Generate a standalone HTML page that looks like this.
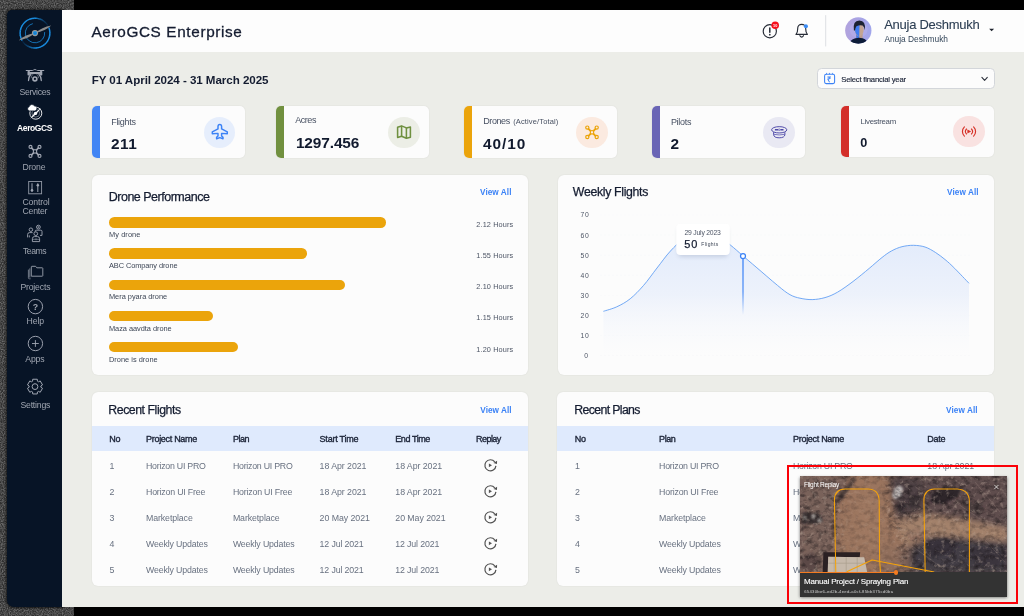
<!DOCTYPE html>
<html lang="en">
<head>
<meta charset="utf-8">
<title>AeroGCS Enterprise</title>
<style>
*{box-sizing:border-box;margin:0;padding:0}
html,body{width:1024px;height:616px;overflow:hidden;background:#000}
body{position:relative;font-family:"Liberation Sans",sans-serif;color:#1b2337}
.abs{position:absolute}
#frame{left:0;top:0;width:76px;height:616px;background:#474747;overflow:hidden}
#main{left:62px;top:9.5px;width:962px;height:597px;background:#ecede8}
#side{left:7px;top:9.5px;width:56px;height:597px;background:#071426;border-radius:5px 0 0 7px;box-shadow:0 0 2.5px .5px rgba(0,0,0,.65)}
#hdr{left:62px;top:9.5px;width:962px;height:42px;background:#fdfdfd}
.t{position:absolute;white-space:nowrap;line-height:1}
.card{position:absolute;top:106px;width:153px;height:51.6px;background:#fcfcfc;border-radius:5px;overflow:hidden;box-shadow:0 0 1.5px rgba(0,0,0,.10)}
.card i{position:absolute;left:0;top:0;width:8px;height:100%}
.card b{position:absolute;top:10.6px;width:31.6px;height:31.6px;border-radius:50%}
.panel{position:absolute;background:#fcfcfc;border-radius:6px;box-shadow:0 0 1.5px rgba(0,0,0,.10)}
.thead{position:absolute;left:0;top:33.7px;width:100%;height:25.6px;background:#dfeafd}
.bar{position:absolute;left:108.9px;height:10.5px;border-radius:5.3px;background:#eba40b}
.lay{position:absolute;left:0;top:0;width:1024px;height:616px;will-change:transform;pointer-events:none}
#svg{position:absolute;left:0;top:0;width:1024px;height:616px;pointer-events:none}
</style>
</head>
<body>
<div id="frame" class="abs"><svg width="76" height="616"><filter id="nz" x="0" y="0" width="100%" height="100%" color-interpolation-filters="sRGB"><feTurbulence type="fractalNoise" baseFrequency="0.85" numOctaves="2" seed="3"/><feColorMatrix type="matrix" values="0 0 0 0 0.42  0 0 0 0 0.42  0 0 0 0 0.42  2.2 0 0 0 -0.7"/></filter><rect width="76" height="616" fill="#303030"/><rect width="76" height="616" filter="url(#nz)"/></svg></div>
<div class="abs" style="left:74px;top:0;width:950px;height:616px;background:#000"></div>
<div id="side" class="abs"></div>
<div id="main" class="abs"></div>
<div id="hdr" class="abs"></div>

<div class="card" style="left:92.2px"><i style="background:#4285f4"></i><b style="left:111.7px;background:#e6eefc"></b></div>
<div class="card" style="left:276.2px"><i style="background:#71903f"></i><b style="left:112px;background:#eceee6"></b></div>
<div class="card" style="left:464.2px"><i style="background:#eba40b"></i><b style="left:112px;background:#fbeae0"></b></div>
<div class="card" style="left:651.8px"><i style="background:#6a65b5"></i><b style="left:111.7px;background:#e9e9f3"></b></div>
<div class="card" style="left:841.3px;top:105.8px"><i style="background:#d32f2a"></i><b style="left:111.8px;top:10px;background:#f9e2e1"></b></div>
<div class="abs" style="left:817.4px;top:68.4px;width:177.2px;height:20.3px;background:#fcfcfc;border:0.6px solid #d3d6da;border-radius:4.5px"></div>

<div class="panel" style="left:92px;top:175px;width:436px;height:199.6px">
</div>
<div class="bar" style="top:217.2px;width:277px"></div>
<div class="bar" style="top:248.4px;width:198px"></div>
<div class="bar" style="top:279.6px;width:235.7px"></div>
<div class="bar" style="top:310.7px;width:104.2px"></div>
<div class="bar" style="top:341.9px;width:128.8px"></div>
<div class="panel" style="left:558px;top:175px;width:436.3px;height:199.6px"></div>
<div class="panel" style="left:92px;top:392px;width:436px;height:193.5px;overflow:hidden"><div class="thead"></div></div>
<div class="panel" style="left:556.6px;top:392px;width:437.7px;height:193.5px;overflow:hidden"><div class="thead"></div></div>

<svg id="svg" viewBox="0 0 1024 616">
<defs>
<clipPath id="avc"><circle cx="858.3" cy="30.5" r="13.15"/></clipPath>
<linearGradient id="avg" x1="0" x2="1" y1="0" y2="0"><stop offset="0" stop-color="#b3a3dd"/><stop offset=".5" stop-color="#a9a4e4"/><stop offset="1" stop-color="#a0a6ec"/></linearGradient>
<linearGradient id="fcg" x1="0" x2="1" y1="0" y2="0"><stop offset="0" stop-color="#b59aa8"/><stop offset=".5" stop-color="#a793b8"/><stop offset="1" stop-color="#7f8fd8"/></linearGradient>
<linearGradient id="cfill" x1="0" x2="0" y1="0" y2="1"><stop offset="0" stop-color="#dfe9fb" stop-opacity=".95"/><stop offset=".5" stop-color="#e9effb" stop-opacity=".8"/><stop offset="1" stop-color="#f6f8fc" stop-opacity="0"/></linearGradient>
<linearGradient id="vl" x1="0" x2="0" y1="0" y2="1"><stop offset="0" stop-color="#3b82f6"/><stop offset=".6" stop-color="#3b82f6" stop-opacity=".85"/><stop offset="1" stop-color="#3b82f6" stop-opacity="0"/></linearGradient>
<filter id="avb" x="-10%" y="-10%" width="120%" height="120%"><feGaussianBlur stdDeviation="0.45"/></filter><filter id="tsh" x="-30%" y="-30%" width="160%" height="170%"><feGaussianBlur stdDeviation="2.2"/></filter>
</defs>
<path d="M22.10,40.55A14.9,14.9 0 0 1 20.29,35.48" stroke="#1a8de0" stroke-opacity="1.00" stroke-width="1.45" fill="none"/><path d="M20.34,35.77A14.9,14.9 0 0 1 20.35,30.39" stroke="#1a8de0" stroke-opacity="1.00" stroke-width="1.45" fill="none"/><path d="M20.30,30.68A14.9,14.9 0 0 1 22.12,25.62" stroke="#1a8de0" stroke-opacity="1.00" stroke-width="1.45" fill="none"/><path d="M21.97,25.88A14.9,14.9 0 0 1 25.39,21.72" stroke="#1a8de0" stroke-opacity="1.00" stroke-width="1.45" fill="none"/><path d="M25.16,21.91A14.9,14.9 0 0 1 29.78,19.15" stroke="#1a8de0" stroke-opacity="1.00" stroke-width="1.45" fill="none"/><path d="M29.50,19.25A14.9,14.9 0 0 1 34.78,18.20" stroke="#1a8de0" stroke-opacity="1.00" stroke-width="1.45" fill="none"/><path d="M34.48,18.21A14.9,14.9 0 0 1 36.12,18.24" stroke="#1a8de0" stroke-opacity="0.94" stroke-width="1.45" fill="none"/><path d="M35.82,18.22A14.9,14.9 0 0 1 37.45,18.40" stroke="#1a8de0" stroke-opacity="0.82" stroke-width="1.45" fill="none"/><path d="M37.16,18.36A14.9,14.9 0 0 1 38.77,18.68" stroke="#1a8de0" stroke-opacity="0.71" stroke-width="1.45" fill="none"/><path d="M38.48,18.61A14.9,14.9 0 0 1 40.05,19.08" stroke="#1a8de0" stroke-opacity="0.60" stroke-width="1.45" fill="none"/><path d="M39.77,18.98A14.9,14.9 0 0 1 41.29,19.59" stroke="#1a8de0" stroke-opacity="0.50" stroke-width="1.45" fill="none"/><path d="M41.02,19.47A14.9,14.9 0 0 1 42.48,20.22" stroke="#1a8de0" stroke-opacity="0.42" stroke-width="1.45" fill="none"/><path d="M42.22,20.07A14.9,14.9 0 0 1 43.61,20.94" stroke="#1a8de0" stroke-opacity="0.34" stroke-width="1.45" fill="none"/><path d="M43.37,20.77A14.9,14.9 0 0 1 44.67,21.77" stroke="#1a8de0" stroke-opacity="0.27" stroke-width="1.45" fill="none"/><path d="M44.44,21.58A14.9,14.9 0 0 1 45.65,22.68" stroke="#1a8de0" stroke-opacity="0.21" stroke-width="1.45" fill="none"/><path d="M45.44,22.47A14.9,14.9 0 0 1 46.55,23.69" stroke="#1a8de0" stroke-opacity="0.16" stroke-width="1.45" fill="none"/><path d="M46.36,23.46A14.9,14.9 0 0 1 47.35,24.76" stroke="#1a8de0" stroke-opacity="0.13" stroke-width="1.45" fill="none"/><path d="M47.18,24.52A14.9,14.9 0 0 1 48.05,25.91" stroke="#1a8de0" stroke-opacity="0.10" stroke-width="1.45" fill="none"/><path d="M48.82,27.52A14.9,14.9 0 0 1 49.88,32.31" stroke="#1a8de0" stroke-opacity="1.00" stroke-width="1.45" fill="none"/><path d="M49.86,32.02A14.9,14.9 0 0 1 49.40,36.91" stroke="#1a8de0" stroke-opacity="1.00" stroke-width="1.45" fill="none"/><path d="M49.48,36.62A14.9,14.9 0 0 1 47.55,41.14" stroke="#1a8de0" stroke-opacity="1.00" stroke-width="1.45" fill="none"/><path d="M47.70,40.89A14.9,14.9 0 0 1 44.48,44.59" stroke="#1a8de0" stroke-opacity="1.00" stroke-width="1.45" fill="none"/><path d="M44.71,44.40A14.9,14.9 0 0 1 40.51,46.95" stroke="#1a8de0" stroke-opacity="1.00" stroke-width="1.45" fill="none"/><path d="M40.78,46.83A14.9,14.9 0 0 1 36.00,47.97" stroke="#1a8de0" stroke-opacity="1.00" stroke-width="1.45" fill="none"/><path d="M36.30,47.94A14.9,14.9 0 0 1 34.59,47.99" stroke="#1a8de0" stroke-opacity="0.94" stroke-width="1.45" fill="none"/><path d="M34.89,48.00A14.9,14.9 0 0 1 33.19,47.89" stroke="#1a8de0" stroke-opacity="0.82" stroke-width="1.45" fill="none"/><path d="M33.49,47.92A14.9,14.9 0 0 1 31.80,47.65" stroke="#1a8de0" stroke-opacity="0.71" stroke-width="1.45" fill="none"/><path d="M32.09,47.71A14.9,14.9 0 0 1 30.44,47.29" stroke="#1a8de0" stroke-opacity="0.60" stroke-width="1.45" fill="none"/><path d="M30.73,47.37A14.9,14.9 0 0 1 29.12,46.79" stroke="#1a8de0" stroke-opacity="0.50" stroke-width="1.45" fill="none"/><path d="M29.40,46.91A14.9,14.9 0 0 1 27.86,46.18" stroke="#1a8de0" stroke-opacity="0.42" stroke-width="1.45" fill="none"/><path d="M28.12,46.32A14.9,14.9 0 0 1 26.65,45.44" stroke="#1a8de0" stroke-opacity="0.34" stroke-width="1.45" fill="none"/><path d="M26.90,45.61A14.9,14.9 0 0 1 25.53,44.60" stroke="#1a8de0" stroke-opacity="0.27" stroke-width="1.45" fill="none"/><path d="M25.76,44.79A14.9,14.9 0 0 1 24.48,43.66" stroke="#1a8de0" stroke-opacity="0.21" stroke-width="1.45" fill="none"/><path d="M24.70,43.86A14.9,14.9 0 0 1 23.53,42.62" stroke="#1a8de0" stroke-opacity="0.16" stroke-width="1.45" fill="none"/><path d="M23.73,42.84A14.9,14.9 0 0 1 22.69,41.49" stroke="#1a8de0" stroke-opacity="0.13" stroke-width="1.45" fill="none"/><path d="M22.86,41.73A14.9,14.9 0 0 1 21.95,40.29" stroke="#1a8de0" stroke-opacity="0.10" stroke-width="1.45" fill="none"/><path d="M32.82,23.65A9.7,9.7 0 1 0 44.65,32.09" stroke="#1a8de0" stroke-width=".75" fill="none"/><path d="M35,33.1Q44.2,31.7 51.3,25.5Q42,27 35,33.1Q28,39.1 18.7,40.4Q25.8,34.3 35,33.1Z" fill="#8d8d8d"/><circle cx="35.0" cy="33.1" r="3.1" fill="#9a9a9a"/><circle cx="35.0" cy="33.1" r="2.1" fill="#1a8de0"/><circle cx="35.0" cy="33.300000000000004" r=".7" fill="#176fb5"/>
<!-- services -->
<g stroke="#a1a7b3" fill="none" stroke-width="1" stroke-linecap="round">
<path d="M26.2,70.5H32.4M37.6,70.5H43.8"/>
<path d="M33.5,69.9Q34.9,68.7 36.3,69.9" stroke-width=".9"/>
<path d="M30.9,74.2Q28.5,76.6 28.5,80.5M38.9,74.2Q41.3,76.6 41.3,80.5" stroke-width="1.25"/>
<path d="M32.8,74.4Q31.3,75.8 31.2,77.8M37,74.4Q38.5,75.8 38.6,77.8" stroke-width=".7" opacity=".8"/>
</g>
<g fill="#a1a7b3"><rect x="29" y="72" width="11.8" height="2.1" rx="1"/><rect x="27.5" y="71.1" width="2.4" height="4.4" rx=".7"/><rect x="39.9" y="71.1" width="2.4" height="4.4" rx=".7"/>
<circle cx="34.9" cy="78.9" r="2.75"/></g><circle cx="34.9" cy="78.9" r="1.1" fill="#071426"/>
<!-- aerogcs -->
<g stroke="#fff" fill="none"><circle cx="35.8" cy="113.2" r="6" stroke-width=".9"/><circle cx="35.8" cy="113.2" r="3.9" stroke-width=".5" opacity=".75"/></g>
<path d="M30.1,118.7 Q33.4,114.2 35,113 Q38.4,109.6 41,108.1 Q38.9,111.6 36.2,113.9 Q34.2,116 30.1,118.7Z" fill="#fff"/><circle cx="35.5" cy="113.4" r="1.7" fill="#fff"/>
<path d="M29.4,110.9 a2.1,2.1 0 0 1 -.3,-4.1 a2.9,2.9 0 0 1 5.3,-.9 a2.3,2.3 0 0 1 1.4,4.3 q-.4,.7 -1.2,.7z" fill="#fff" stroke="#071426" stroke-width=".7"/>
<!-- drone -->
<g stroke="#a1a7b3" fill="none" stroke-width="1.75"><path d="M31.1,147.5L38.9,155.3M38.9,147.5L31.1,155.3"/><circle cx="30.5" cy="146.9" r="1.5" stroke-width="1.15"/><circle cx="39.5" cy="146.9" r="1.5" stroke-width="1.15"/><circle cx="30.5" cy="155.9" r="1.5" stroke-width="1.15"/><circle cx="39.5" cy="155.9" r="1.5" stroke-width="1.15"/><rect x="33.4" y="149.8" width="3.2" height="3.2" fill="#071426" stroke-width="1.1"/></g>
<!-- control center -->
<g stroke="#9299a6" fill="none" stroke-width=".9"><rect x="28.7" y="181.5" width="12.9" height="12.3"/><path d="M32,183.2V192M37.8,183.2V192" stroke-width="1.1"/></g><circle cx="32" cy="190.3" r="1.25" fill="#a1a7b3"/><circle cx="37.8" cy="185.3" r="1.25" fill="#a1a7b3"/>
<!-- teams -->
<g stroke="#a1a7b3" fill="none" stroke-width=".9"><circle cx="30.9" cy="229.7" r="1.75"/><path d="M27.6,237.4V234.6Q27.6,232.6 29.6,232.6H32.6"/><path d="M29.3,235.4v2"/><circle cx="38.4" cy="227.1" r="1.9"/><path d="M37.4,227.1h2M38.4,226.1v2" stroke-width=".6"/><path d="M35.2,232V231.2Q35.2,230.2 36.2,230.2H40.8Q42,230.2 42,231.4V235.4H40"/><circle cx="35.8" cy="233.7" r="1.85" fill="#071426"/><path d="M32.4,241.6V238.6Q32.4,236.6 34.4,236.6H37.4Q39.6,236.6 39.6,238.6V241.6Z" fill="#071426"/><path d="M32.4,239.3h7.2M36,238.3v2" stroke-width=".6"/></g>
<!-- projects -->
<g stroke="#8e95a2" fill="none" stroke-width="1" stroke-linejoin="round"><path d="M30.6,278.8H29.4Q28.4,278.8 28.4,277.8V269.6" stroke="#737b89"/><path d="M31.3,276.2V266.9Q31.3,266.3 31.9,266.3H35.6L36.8,267.8H42.2Q42.8,267.8 42.8,268.4V275.6Q42.8,276.2 42.2,276.2Z"/><path d="M29.8,277.6V268.4" stroke="#737b89"/></g>
<!-- help -->
<circle cx="35.4" cy="306.6" r="7.2" stroke="#a1a7b3" fill="none" stroke-width=".95"/>
<!-- apps -->
<circle cx="35.4" cy="343.5" r="7.2" stroke="#a1a7b3" fill="none" stroke-width=".95"/><path d="M32,343.5h6.8M35.4,340.1v6.8" stroke="#a1a7b3" stroke-width=".9" fill="none"/>
<!-- settings -->
<path d="M32.59,381.21 L32.72,379.24 L37.28,379.24 L37.41,381.21 L38.46,381.82 L40.23,380.95 L42.51,384.89 L40.87,385.99 L40.87,387.21 L42.51,388.31 L40.23,392.25 L38.46,391.38 L37.41,391.99 L37.28,393.96 L32.72,393.96 L32.59,391.99 L31.54,391.38 L29.77,392.25 L27.49,388.31 L29.13,387.21 L29.13,385.99 L27.49,384.89 L29.77,380.95 L31.54,381.82Z" fill="none" stroke="#a1a7b3" stroke-width="1" stroke-linejoin="round"/><circle cx="35.0" cy="386.6" r="2.9" fill="none" stroke="#a1a7b3" stroke-width="1"/>
<!-- header -->
<g stroke="#262b36" fill="none" stroke-width="1.15" stroke-linecap="round"><circle cx="769.8" cy="31.2" r="6.6"/><path d="M769.8,27.9V32.2" stroke-width="1.5"/><path d="M796,34.4C797.8,32.6 797.7,30.5 797.7,28.3A4,4 0 0 1 805.7,28.3C805.7,30.5 805.6,32.6 807.4,34.4Z" stroke-linejoin="round"/><path d="M799.9,35.7Q801.7,38.5 803.5,35.7"/></g>
<circle cx="769.8" cy="34.7" r=".85" fill="#262b36"/>
<circle cx="775.2" cy="25.3" r="3.8" fill="#f70f1c"/>
<circle cx="805.9" cy="26.3" r="2.05" fill="#3b8cf6"/>
<path d="M825.7,15.2V46.4" stroke="#dddfe3" stroke-width="1"/>
<g clip-path="url(#avc)"><rect x="844" y="16" width="29" height="29" fill="url(#avg)"/><g filter="url(#avb)">
<ellipse cx="858.6" cy="29.6" rx="9" ry="8" fill="#bdb8ee" opacity=".35"/>
<path d="M856.3,34V38.6H862.6V34Z" fill="#b99b8e"/><path d="M856.3,34V38.6H859.2V34Z" fill="#3f78e6"/>
<path d="M848.8,45Q849.6,39.6 855.4,38.2Q859,37.2 862.6,38.2Q867.8,39.6 868.4,45Z" fill="#101a38"/>
<ellipse cx="859.3" cy="29.6" rx="4.4" ry="7" fill="#c4a592"/>
<path d="M859.6,22.6Q854.6,22.6 854.9,29.6Q855.2,35 859.2,36.8Z" fill="#3f7df0"/>
<path d="M853.9,30.6Q852.4,20.8 859.4,20.6Q866,20.8 864.9,30.2Q864.2,26.6 862.6,25.4Q859,24.6 856.4,26.2Q855.2,27.8 855,30.6Z" fill="#1d2030"/>
</g></g>
<path d="M989.1,28.7H994.1L991.6,31.3Z" fill="#1d222c"/>
<!-- select -->
<g stroke="#3b82f6" fill="none" stroke-width="1.05"><rect x="824.6" y="74.3" width="10" height="9.3" rx="1.6"/><path d="M826.5,72.9V74.3M829.5,72.9V74.3M832.6,72.9V74.3" stroke-width=".8"/></g>
<path d="M981.9,77.3L984.6,80.4L987.3,77.3" stroke="#2a2f3a" fill="none" stroke-width="1.05" stroke-linecap="round" stroke-linejoin="round"/>
<!-- card icons -->
<path d="M219.8,124.4Q221.6,124.4 221.6,126.6L221.6,128.9L227.3,131.8L227.3,133.7L221.6,133.4L221.6,136L223,137.3L223,138.7L219.8,137.6L216.6,138.7L216.6,137.3L218,136L218,133.4L212.3,133.7L212.3,131.8L218,128.9L218,126.6Q218,124.4 219.8,124.4Z" fill="none" stroke="#3b82f6" stroke-width="1.45" stroke-linejoin="round"/>
<g fill="none" stroke="#6f9040" stroke-width="1.55" stroke-linejoin="round"><path d="M397.6,127.3L401.6,125.9L406.4,127.9L410.4,127V137.2L406.4,138.3L401.6,136.2L397.6,137.4Z"/><path d="M401.6,126V136.2M406.4,127.9V138.2"/></g>
<g stroke="#eba40b" fill="none" stroke-width="1.9"><path d="M588,128.3L596,136.3M596,128.3L588,136.3"/><circle cx="587.3" cy="127.6" r="1.6" stroke-width="1.2"/><circle cx="596.7" cy="127.6" r="1.6" stroke-width="1.2"/><circle cx="587.3" cy="137" r="1.6" stroke-width="1.2"/><circle cx="596.7" cy="137" r="1.6" stroke-width="1.2"/><rect x="590.4" y="130.7" width="3.2" height="3.2" fill="#fcebe2" stroke-width="1.1"/></g>
<g stroke="#4b46a6" fill="none" stroke-width=".95"><ellipse cx="779.2" cy="129.8" rx="7.6" ry="3.15"/><path d="M773.6,132.2V134.6Q773.9,137.8 779.2,137.8Q784.6,137.8 784.9,134.6V132.2"/><path d="M773.7,134.3Q779.2,135.6 784.8,134.3" stroke-width=".7"/><path d="M774.9,129.8H778M780.4,129.8H783.5" stroke-width="1.5"/><circle cx="779.2" cy="129.7" r=".9" stroke-width=".6"/></g>
<g stroke="#d63027" fill="none" stroke-width="1.15" stroke-linecap="round"><path d="M964.4,126.8A6.6,6.6 0 0 0 964.4,136.2M973.6,126.8A6.6,6.6 0 0 1 973.6,136.2"/><path d="M966.5,129A3.7,3.7 0 0 0 966.5,134M971.5,129A3.7,3.7 0 0 1 971.5,134"/></g><path d="M967.4,129.5L971.2,131.5L967.4,133.5Z" fill="#d63027"/>
<path d="M600,355.5H972" stroke="#f1f2f5" stroke-width=".5" stroke-dasharray="2 2" opacity=".55"/><path d="M600,335.4H972" stroke="#f1f2f5" stroke-width=".5" stroke-dasharray="2 2" opacity=".55"/><path d="M600,315.4H972" stroke="#f1f2f5" stroke-width=".5" stroke-dasharray="2 2" opacity=".55"/><path d="M600,295.3H972" stroke="#f1f2f5" stroke-width=".5" stroke-dasharray="2 2" opacity=".55"/><path d="M600,275.2H972" stroke="#f1f2f5" stroke-width=".5" stroke-dasharray="2 2" opacity=".55"/><path d="M600,255.2H972" stroke="#f1f2f5" stroke-width=".5" stroke-dasharray="2 2" opacity=".55"/><path d="M600,235.1H972" stroke="#f1f2f5" stroke-width=".5" stroke-dasharray="2 2" opacity=".55"/><path d="M600,215.0H972" stroke="#f1f2f5" stroke-width=".5" stroke-dasharray="2 2" opacity=".55"/><path d="M603.4,311.3C605.6,310.6 612.3,308.9 616.8,306.8C621.3,304.7 625.7,302.4 630.2,298.8C634.7,295.2 639.1,290.5 643.6,285.4C648.1,280.3 652.5,273.7 657,268C661.5,262.3 665.9,255.9 670.4,251.1C674.9,246.3 678.7,242.1 684,239C689.3,235.9 696.0,233.0 702,232.8C708.0,232.6 715.2,235.9 720,238C724.8,240.1 726.8,242.2 730.6,245.2C734.4,248.2 738.8,252.2 743,255.9C747.2,259.6 750.4,262.2 756.1,267.1C761.9,272.0 771.9,280.8 777.5,285.4C783.1,290.0 786.2,292.6 790,294.7C793.8,296.8 796.3,297.4 800,298.2C803.7,299.0 808.0,299.7 812.2,299.6C816.4,299.5 820.8,298.8 825,297.6C829.2,296.4 832.8,294.9 837.5,292.2C842.2,289.5 847.7,285.5 853,281.5C858.3,277.5 864.4,272.4 869.2,268.4C874.0,264.4 878.3,260.4 882,257.5C885.7,254.6 888.1,252.8 891.4,251C894.7,249.2 898.3,247.6 902,246.7C905.7,245.8 909.7,245.2 913.5,245.3C917.3,245.4 921.3,245.8 925,247C928.7,248.2 932.4,250.5 935.7,252.6C939.0,254.7 941.8,256.9 945,259.5C948.2,262.1 950.7,264.4 954.7,268.4C958.7,272.4 966.6,280.8 969,283.3L969,356L603.4,356Z" fill="url(#cfill)"/><path d="M603.4,311.3C605.6,310.6 612.3,308.9 616.8,306.8C621.3,304.7 625.7,302.4 630.2,298.8C634.7,295.2 639.1,290.5 643.6,285.4C648.1,280.3 652.5,273.7 657,268C661.5,262.3 665.9,255.9 670.4,251.1C674.9,246.3 678.7,242.1 684,239C689.3,235.9 696.0,233.0 702,232.8C708.0,232.6 715.2,235.9 720,238C724.8,240.1 726.8,242.2 730.6,245.2C734.4,248.2 738.8,252.2 743,255.9C747.2,259.6 750.4,262.2 756.1,267.1C761.9,272.0 771.9,280.8 777.5,285.4C783.1,290.0 786.2,292.6 790,294.7C793.8,296.8 796.3,297.4 800,298.2C803.7,299.0 808.0,299.7 812.2,299.6C816.4,299.5 820.8,298.8 825,297.6C829.2,296.4 832.8,294.9 837.5,292.2C842.2,289.5 847.7,285.5 853,281.5C858.3,277.5 864.4,272.4 869.2,268.4C874.0,264.4 878.3,260.4 882,257.5C885.7,254.6 888.1,252.8 891.4,251C894.7,249.2 898.3,247.6 902,246.7C905.7,245.8 909.7,245.2 913.5,245.3C917.3,245.4 921.3,245.8 925,247C928.7,248.2 932.4,250.5 935.7,252.6C939.0,254.7 941.8,256.9 945,259.5C948.2,262.1 950.7,264.4 954.7,268.4C958.7,272.4 966.6,280.8 969,283.3" fill="none" stroke="#5b9bf3" stroke-width=".85"/><rect x="742.35" y="257" width="1.3" height="58" fill="url(#vl)"/><circle cx="743" cy="256.1" r="2.5" fill="#fff" stroke="#3b82f6" stroke-width="1.25"/><rect x="678" y="227" width="50" height="30" rx="4" fill="#5a6a8a" opacity=".22" filter="url(#tsh)"/><rect x="676.3" y="223.7" width="53.5" height="31.4" rx="4" fill="#fff"/>
<path d="M495.92,465.88A5.55,5.55 0 1 1 494.77,461.88" fill="none" stroke="#505050" stroke-width="1.2"/><path d="M493.40,463.10L497.10,460.80L497.00,464.00Z" fill="#505050"/><path d="M488.90,463.40L492.00,465.3L488.90,467.20Z" fill="#555"/><path d="M495.92,491.88A5.55,5.55 0 1 1 494.77,487.88" fill="none" stroke="#505050" stroke-width="1.2"/><path d="M493.40,489.10L497.10,486.80L497.00,490.00Z" fill="#505050"/><path d="M488.90,489.40L492.00,491.3L488.90,493.20Z" fill="#555"/><path d="M495.92,517.88A5.55,5.55 0 1 1 494.77,513.88" fill="none" stroke="#505050" stroke-width="1.2"/><path d="M493.40,515.10L497.10,512.80L497.00,516.00Z" fill="#505050"/><path d="M488.90,515.40L492.00,517.3L488.90,519.20Z" fill="#555"/><path d="M495.92,543.88A5.55,5.55 0 1 1 494.77,539.88" fill="none" stroke="#505050" stroke-width="1.2"/><path d="M493.40,541.10L497.10,538.80L497.00,542.00Z" fill="#505050"/><path d="M488.90,541.40L492.00,543.3L488.90,545.20Z" fill="#555"/><path d="M495.92,569.88A5.55,5.55 0 1 1 494.77,565.88" fill="none" stroke="#505050" stroke-width="1.2"/><path d="M493.40,567.10L497.10,564.80L497.00,568.00Z" fill="#505050"/><path d="M488.90,567.40L492.00,569.3L488.90,571.20Z" fill="#555"/>

</svg>
<div class="lay">
<div class="t" style="left:19.51px;top:88.00px;font-size:8.7px;color:#a0a6b1;letter-spacing:-0.318px;">Services</div>
<div class="t" style="left:17.12px;top:124.00px;font-size:8.5px;color:#ffffff;font-weight:bold;letter-spacing:-0.422px;">AeroGCS</div>
<div class="t" style="left:22.51px;top:163.00px;font-size:8.7px;color:#a0a6b1;letter-spacing:-0.147px;">Drone</div>
<div class="t" style="left:22.41px;top:198.00px;font-size:8.7px;color:#a0a6b1;letter-spacing:-0.139px;">Control</div>
<div class="t" style="left:22.61px;top:207.00px;font-size:8.7px;color:#a0a6b1;letter-spacing:-0.259px;">Center</div>
<div class="t" style="left:23.01px;top:247.00px;font-size:8.7px;color:#a0a6b1;letter-spacing:-0.503px;">Teams</div>
<div class="t" style="left:20.41px;top:283.00px;font-size:8.7px;color:#a0a6b1;letter-spacing:-0.187px;">Projects</div>
<div class="t" style="left:26.61px;top:317.00px;font-size:8.7px;color:#a0a6b1;letter-spacing:-0.164px;">Help</div>
<div class="t" style="left:25.31px;top:355.00px;font-size:8.7px;color:#a0a6b1;letter-spacing:-0.176px;">Apps</div>
<div class="t" style="left:20.41px;top:401.00px;font-size:8.7px;color:#a0a6b1;letter-spacing:-0.201px;">Settings</div>
<div class="t" style="left:32.80px;top:303.00px;font-size:8.8px;color:#a0a6b1;font-weight:bold;">?</div>
<div class="t" style="left:91.51px;top:24.00px;font-size:15.3px;color:#141c30;letter-spacing:0.644px;-webkit-text-stroke:0.3px currentColor;">AeroGCS Enterprise</div>
<div class="t" style="left:884.21px;top:18.00px;font-size:13px;color:#2b3d52;letter-spacing:-0.264px;-webkit-text-stroke:0.1px currentColor;">Anuja Deshmukh</div>
<div class="t" style="left:884.42px;top:35.00px;font-size:8.4px;color:#34465a;letter-spacing:-0.017px;">Anuja Deshmukh</div>
<div class="t" style="left:772.93px;top:25.00px;font-size:3.8px;color:#ffffff;font-weight:bold;letter-spacing:0.308px;">10</div>
<div class="t" style="left:91.68px;top:74.00px;font-size:11.6px;color:#141c30;font-weight:bold;letter-spacing:-0.054px;">FY 01 April 2024 - 31 March 2025</div>
<div class="t" style="left:841.25px;top:76.00px;font-size:7.7px;color:#1b2337;letter-spacing:-0.201px;-webkit-text-stroke:0.15px currentColor;">Select financial year</div>
<div class="t" style="left:826.86px;top:76.00px;font-size:7.6px;color:#3b82f6;font-weight:bold;font-family:"DejaVu Sans","Liberation Sans",sans-serif;">₹</div>
<div class="t" style="left:111.19px;top:118.00px;font-size:9px;color:#475062;letter-spacing:-0.284px;">Flights</div>
<div class="t" style="left:110.91px;top:136.00px;font-size:15.4px;color:#111a2e;font-weight:bold;letter-spacing:0.571px;">211</div>
<div class="t" style="left:295.20px;top:116.00px;font-size:9px;color:#475062;letter-spacing:-0.451px;">Acres</div>
<div class="t" style="left:295.91px;top:135.00px;font-size:15.4px;color:#111a2e;font-weight:bold;letter-spacing:-0.102px;">1297.456</div>
<div class="t" style="left:483.20px;top:117.00px;font-size:9px;color:#475062;letter-spacing:-0.401px;">Drones</div>
<div class="t" style="left:513.16px;top:118.00px;font-size:7.5px;color:#475062;letter-spacing:0.140px;">(Active/Total)</div>
<div class="t" style="left:482.91px;top:136.00px;font-size:15.4px;color:#111a2e;font-weight:bold;letter-spacing:0.943px;">40/10</div>
<div class="t" style="left:670.89px;top:118.00px;font-size:9px;color:#475062;letter-spacing:-0.261px;">Pilots</div>
<div class="t" style="left:670.61px;top:136.00px;font-size:15.4px;color:#111a2e;font-weight:bold;">2</div>
<div class="t" style="left:860.55px;top:118.00px;font-size:7.8px;color:#475062;letter-spacing:-0.282px;">Livestream</div>
<div class="t" style="left:860.33px;top:137.00px;font-size:12.7px;color:#111a2e;font-weight:bold;">0</div>
<div class="t" style="left:108.74px;top:191.00px;font-size:12.5px;color:#141c30;letter-spacing:-0.497px;-webkit-text-stroke:0.25px currentColor;">Drone Performance</div>
<div class="t" style="left:480.03px;top:189.00px;font-size:8.2px;color:#3b82f6;font-weight:bold;letter-spacing:0.069px;">View All</div>
<div class="t" style="left:108.97px;top:231.00px;font-size:7.4px;color:#3c4555;letter-spacing:0.093px;">My drone</div>
<div class="t" style="left:108.97px;top:262.00px;font-size:7.4px;color:#3c4555;letter-spacing:-0.080px;">ABC Company drone</div>
<div class="t" style="left:108.97px;top:293.00px;font-size:7.4px;color:#3c4555;letter-spacing:-0.012px;">Mera pyara drone</div>
<div class="t" style="left:108.97px;top:325.00px;font-size:7.4px;color:#3c4555;letter-spacing:-0.038px;">Maza aavdta drone</div>
<div class="t" style="left:108.97px;top:356.00px;font-size:7.4px;color:#3c4555;letter-spacing:0.022px;">Drone is drone</div>
<div class="t" style="left:476.37px;top:221.00px;font-size:7.3px;color:#4d5565;letter-spacing:0.117px;">2.12 Hours</div>
<div class="t" style="left:476.37px;top:252.00px;font-size:7.3px;color:#4d5565;letter-spacing:0.117px;">1.55 Hours</div>
<div class="t" style="left:476.37px;top:283.00px;font-size:7.3px;color:#4d5565;letter-spacing:0.117px;">2.10 Hours</div>
<div class="t" style="left:476.37px;top:314.00px;font-size:7.3px;color:#4d5565;letter-spacing:0.117px;">1.15 Hours</div>
<div class="t" style="left:476.37px;top:346.00px;font-size:7.3px;color:#4d5565;letter-spacing:0.117px;">1.20 Hours</div>
<div class="t" style="left:572.85px;top:186.00px;font-size:12.3px;color:#141c30;letter-spacing:-0.325px;-webkit-text-stroke:0.25px currentColor;">Weekly Flights</div>
<div class="t" style="left:947.03px;top:189.00px;font-size:8.2px;color:#3b82f6;font-weight:bold;letter-spacing:0.084px;">View All</div>
<div class="t" style="left:580.59px;top:212.00px;font-size:6.8px;color:#4d5565;letter-spacing:0.550px;">70</div>
<div class="t" style="left:580.59px;top:233.00px;font-size:6.8px;color:#4d5565;letter-spacing:0.550px;">60</div>
<div class="t" style="left:580.59px;top:253.00px;font-size:6.8px;color:#4d5565;letter-spacing:0.550px;">50</div>
<div class="t" style="left:580.59px;top:273.00px;font-size:6.8px;color:#4d5565;letter-spacing:0.550px;">40</div>
<div class="t" style="left:580.59px;top:293.00px;font-size:6.8px;color:#4d5565;letter-spacing:0.550px;">30</div>
<div class="t" style="left:580.59px;top:313.00px;font-size:6.8px;color:#4d5565;letter-spacing:0.550px;">20</div>
<div class="t" style="left:580.59px;top:333.00px;font-size:6.8px;color:#4d5565;letter-spacing:0.550px;">10</div>
<div class="t" style="left:584.29px;top:353.00px;font-size:6.8px;color:#4d5565;">0</div>
<div class="t" style="left:684.49px;top:230.00px;font-size:6.8px;color:#4d5565;letter-spacing:-0.203px;">29 July 2023</div>
<div class="t" style="left:684.30px;top:239.00px;font-size:11px;color:#141c30;letter-spacing:0.940px;-webkit-text-stroke:0.25px currentColor;">50</div>
<div class="t" style="left:701.27px;top:242.00px;font-size:5px;color:#3c4555;letter-spacing:0.386px;">Flights</div>
<div class="t" style="left:108.35px;top:404.00px;font-size:12.3px;color:#141c30;letter-spacing:-0.454px;-webkit-text-stroke:0.25px currentColor;">Recent Flights</div>
<div class="t" style="left:480.33px;top:407.00px;font-size:8.2px;color:#3b82f6;font-weight:bold;letter-spacing:0.026px;">View All</div>
<div class="t" style="left:109.19px;top:435.00px;font-size:9px;color:#1b2337;letter-spacing:-0.206px;-webkit-text-stroke:0.35px currentColor;">No</div>
<div class="t" style="left:146.00px;top:435.00px;font-size:9px;color:#1b2337;letter-spacing:-0.293px;-webkit-text-stroke:0.35px currentColor;">Project Name</div>
<div class="t" style="left:232.90px;top:435.00px;font-size:9px;color:#1b2337;letter-spacing:-0.469px;-webkit-text-stroke:0.35px currentColor;">Plan</div>
<div class="t" style="left:319.60px;top:435.00px;font-size:9px;color:#1b2337;letter-spacing:-0.223px;-webkit-text-stroke:0.35px currentColor;">Start Time</div>
<div class="t" style="left:395.30px;top:435.00px;font-size:9px;color:#1b2337;letter-spacing:-0.432px;-webkit-text-stroke:0.35px currentColor;">End Time</div>
<div class="t" style="left:476.00px;top:435.00px;font-size:9px;color:#1b2337;letter-spacing:-0.541px;-webkit-text-stroke:0.35px currentColor;">Replay</div>
<div class="t" style="left:109.40px;top:462.00px;font-size:8.8px;color:#687180;">1</div>
<div class="t" style="left:146.00px;top:462.00px;font-size:8.8px;color:#687180;letter-spacing:-0.244px;">Horizon UI PRO</div>
<div class="t" style="left:232.90px;top:462.00px;font-size:8.8px;color:#687180;letter-spacing:-0.244px;">Horizon UI PRO</div>
<div class="t" style="left:319.60px;top:462.00px;font-size:8.8px;color:#687180;letter-spacing:-0.056px;">18 Apr 2021</div>
<div class="t" style="left:395.30px;top:462.00px;font-size:8.8px;color:#687180;letter-spacing:-0.056px;">18 Apr 2021</div>
<div class="t" style="left:109.40px;top:488.00px;font-size:8.8px;color:#687180;">2</div>
<div class="t" style="left:146.00px;top:488.00px;font-size:8.8px;color:#687180;letter-spacing:-0.193px;">Horizon UI Free</div>
<div class="t" style="left:232.90px;top:488.00px;font-size:8.8px;color:#687180;letter-spacing:-0.193px;">Horizon UI Free</div>
<div class="t" style="left:319.60px;top:488.00px;font-size:8.8px;color:#687180;letter-spacing:-0.056px;">18 Apr 2021</div>
<div class="t" style="left:395.30px;top:488.00px;font-size:8.8px;color:#687180;letter-spacing:-0.056px;">18 Apr 2021</div>
<div class="t" style="left:109.40px;top:514.00px;font-size:8.8px;color:#687180;">3</div>
<div class="t" style="left:146.00px;top:514.00px;font-size:8.8px;color:#687180;letter-spacing:-0.113px;">Marketplace</div>
<div class="t" style="left:232.90px;top:514.00px;font-size:8.8px;color:#687180;letter-spacing:-0.113px;">Marketplace</div>
<div class="t" style="left:319.60px;top:514.00px;font-size:8.8px;color:#687180;letter-spacing:-0.058px;">20 May 2021</div>
<div class="t" style="left:395.30px;top:514.00px;font-size:8.8px;color:#687180;letter-spacing:-0.058px;">20 May 2021</div>
<div class="t" style="left:109.40px;top:540.00px;font-size:8.8px;color:#687180;">4</div>
<div class="t" style="left:146.00px;top:540.00px;font-size:8.8px;color:#687180;letter-spacing:-0.161px;">Weekly Updates</div>
<div class="t" style="left:232.90px;top:540.00px;font-size:8.8px;color:#687180;letter-spacing:-0.161px;">Weekly Updates</div>
<div class="t" style="left:319.60px;top:540.00px;font-size:8.8px;color:#687180;letter-spacing:-0.141px;">12 Jul 2021</div>
<div class="t" style="left:395.30px;top:540.00px;font-size:8.8px;color:#687180;letter-spacing:-0.141px;">12 Jul 2021</div>
<div class="t" style="left:109.40px;top:566.00px;font-size:8.8px;color:#687180;">5</div>
<div class="t" style="left:146.00px;top:566.00px;font-size:8.8px;color:#687180;letter-spacing:-0.161px;">Weekly Updates</div>
<div class="t" style="left:232.90px;top:566.00px;font-size:8.8px;color:#687180;letter-spacing:-0.161px;">Weekly Updates</div>
<div class="t" style="left:319.60px;top:566.00px;font-size:8.8px;color:#687180;letter-spacing:-0.141px;">12 Jul 2021</div>
<div class="t" style="left:395.30px;top:566.00px;font-size:8.8px;color:#687180;letter-spacing:-0.141px;">12 Jul 2021</div>
<div class="t" style="left:574.25px;top:404.00px;font-size:12.3px;color:#141c30;letter-spacing:-0.630px;-webkit-text-stroke:0.25px currentColor;">Recent Plans</div>
<div class="t" style="left:946.03px;top:407.00px;font-size:8.2px;color:#3b82f6;font-weight:bold;letter-spacing:0.084px;">View All</div>
<div class="t" style="left:574.80px;top:435.00px;font-size:9px;color:#1b2337;letter-spacing:-0.206px;-webkit-text-stroke:0.35px currentColor;">No</div>
<div class="t" style="left:659.10px;top:435.00px;font-size:9px;color:#1b2337;letter-spacing:-0.469px;-webkit-text-stroke:0.35px currentColor;">Plan</div>
<div class="t" style="left:793.00px;top:435.00px;font-size:9px;color:#1b2337;letter-spacing:-0.293px;-webkit-text-stroke:0.35px currentColor;">Project Name</div>
<div class="t" style="left:927.30px;top:435.00px;font-size:9px;color:#1b2337;letter-spacing:-0.302px;-webkit-text-stroke:0.35px currentColor;">Date</div>
<div class="t" style="left:575.10px;top:462.00px;font-size:8.8px;color:#687180;">1</div>
<div class="t" style="left:659.10px;top:462.00px;font-size:8.8px;color:#687180;letter-spacing:-0.244px;">Horizon UI PRO</div>
<div class="t" style="left:793.00px;top:462.00px;font-size:8.8px;color:#687180;letter-spacing:-0.244px;">Horizon UI PRO</div>
<div class="t" style="left:927.30px;top:462.00px;font-size:8.8px;color:#687180;letter-spacing:-0.056px;">18 Apr 2021</div>
<div class="t" style="left:575.10px;top:488.00px;font-size:8.8px;color:#687180;">2</div>
<div class="t" style="left:659.10px;top:488.00px;font-size:8.8px;color:#687180;letter-spacing:-0.193px;">Horizon UI Free</div>
<div class="t" style="left:793.00px;top:488.00px;font-size:8.8px;color:#687180;letter-spacing:-0.193px;">Horizon UI Free</div>
<div class="t" style="left:927.30px;top:488.00px;font-size:8.8px;color:#687180;letter-spacing:-0.056px;">18 Apr 2021</div>
<div class="t" style="left:575.10px;top:514.00px;font-size:8.8px;color:#687180;">3</div>
<div class="t" style="left:659.10px;top:514.00px;font-size:8.8px;color:#687180;letter-spacing:-0.113px;">Marketplace</div>
<div class="t" style="left:793.00px;top:514.00px;font-size:8.8px;color:#687180;letter-spacing:-0.113px;">Marketplace</div>
<div class="t" style="left:927.30px;top:514.00px;font-size:8.8px;color:#687180;letter-spacing:-0.058px;">20 May 2021</div>
<div class="t" style="left:575.10px;top:540.00px;font-size:8.8px;color:#687180;">4</div>
<div class="t" style="left:659.10px;top:540.00px;font-size:8.8px;color:#687180;letter-spacing:-0.161px;">Weekly Updates</div>
<div class="t" style="left:793.00px;top:540.00px;font-size:8.8px;color:#687180;letter-spacing:-0.161px;">Weekly Updates</div>
<div class="t" style="left:927.30px;top:540.00px;font-size:8.8px;color:#687180;letter-spacing:-0.141px;">12 Jul 2021</div>
<div class="t" style="left:575.10px;top:566.00px;font-size:8.8px;color:#687180;">5</div>
<div class="t" style="left:659.10px;top:566.00px;font-size:8.8px;color:#687180;letter-spacing:-0.161px;">Weekly Updates</div>
<div class="t" style="left:793.00px;top:566.00px;font-size:8.8px;color:#687180;letter-spacing:-0.161px;">Weekly Updates</div>
<div class="t" style="left:927.30px;top:566.00px;font-size:8.8px;color:#687180;letter-spacing:-0.141px;">12 Jul 2021</div>

</div>
<div class="abs" style="left:786.8px;top:464.5px;width:231px;height:139.4px;border:2.1px solid #fb0007"></div>
<div class="abs" style="left:799.8px;top:475.8px;width:207.5px;height:121.1px;background:#333;box-shadow:0 0.5px 3px rgba(0,0,0,.55);overflow:hidden">
<svg width="207.5" height="96" viewBox="799.8 475.8 207.5 96" style="position:absolute;left:0;top:0">
<defs>
<linearGradient id="pg" x1="0" x2="1" y1="0" y2="0"><stop offset="0" stop-color="#74615c"/><stop offset=".18" stop-color="#8b6b5a"/><stop offset=".38" stop-color="#94705b"/><stop offset=".5" stop-color="#80655a"/><stop offset="1" stop-color="#6a5b5a"/></linearGradient>
<filter id="bl" x="-20%" y="-20%" width="140%" height="140%"><feGaussianBlur stdDeviation="3.2"/></filter>
<filter id="bl2" x="-20%" y="-20%" width="140%" height="140%"><feGaussianBlur stdDeviation="1.2"/></filter>
<filter id="tx" x="0" y="0" width="100%" height="100%" color-interpolation-filters="sRGB"><feTurbulence type="fractalNoise" baseFrequency="0.16 0.2" numOctaves="3" seed="11"/><feColorMatrix type="matrix" values="0 0 0 0 0.1  0 0 0 0 0.08  0 0 0 0 0.09  1.4 0 0 0 -0.6"/></filter>
<filter id="tx2" x="0" y="0" width="100%" height="100%" color-interpolation-filters="sRGB"><feTurbulence type="fractalNoise" baseFrequency="0.22" numOctaves="3" seed="5"/><feColorMatrix type="matrix" values="0 0 0 0 0.78  0 0 0 0 0.7  0 0 0 0 0.64  1.4 0 0 0 -0.78"/></filter><filter id="bl3"><feGaussianBlur stdDeviation="0.35"/></filter>
</defs>
<rect x="799" y="475" width="210" height="98" fill="url(#pg)"/>
<g filter="url(#bl)">
<path d="M799,475L856,475L837,505L836,572L799,572Z" fill="#79625a"/>
<path d="M853,475L885,475L890,515L905,545L908,572L834,572L836,505Z" fill="#98725b"/>
<ellipse cx="869" cy="522" rx="13" ry="30" fill="#a37c63"/>
<path d="M889,476L926,476L922,512L896,517Z" fill="#4f4244"/>
<path d="M922,475L1008,475L1008,526L960,519L922,513Z" fill="#5e4e4d"/>
<path d="M892,523L925,514L965,520L1008,528L1008,541L965,537L930,535L905,546Z" fill="#a07f69"/>
<path d="M910,549L932,537L965,539L1008,543L1008,573L908,573Z" fill="#423d45"/>
<path d="M880,546L910,546L910,573L880,573Z" fill="#7e6359"/>
</g>
<g filter="url(#bl2)">
<path d="M855,478L836,503" stroke="#4d3f3c" stroke-width="4.5" fill="none"/>
<path d="M801,513l6,-2l3,3l6,-2l5,3l2,6l-6,3l-7,-1l-8,1z" fill="#3c3436"/>
<path d="M803,516l3,1l-1,3zM811,514l4,1l-2,4zM817,519l4,0l-1,4z" fill="#b9b2ae"/>
<path d="M894,489l5,-4l4,3l-2,8l-6,3l-3,-3z" fill="#bdb7b6"/>
<path d="M896,505l8,-3l2,5l-7,4z" fill="#2f282b"/>
<path d="M908,500l6,-5l8,1l-3,9l-9,3z" fill="#3b3134"/>
<path d="M931,493l14,-6l16,2l-4,8l-14,7l-12,-2z" fill="#2f282c"/>
<path d="M962,497l10,6l8,-2l4,9l-12,3l-10,-8z" fill="#4a3d3e"/>
<path d="M905,533l10,-6l12,4l-4,8l-12,2z" fill="#8e6d5f"/>
<path d="M925,541l20,-3l14,6l-8,10l-20,2z" fill="#37333b"/>
<path d="M970,548l20,-2l14,8l-6,12l-24,-2z" fill="#3b363e"/>
<path d="M800,558l12,-6l8,6l-4,12l-14,0z" fill="#5b4a47"/>
</g>
<g stroke="#b09a8e" stroke-width=".6" fill="none" opacity=".38" filter="url(#bl3)">
<path d="M912,546l22,16l12,9M985,540l20,22M952,500l30,20l20,4M975,482l25,30M900,528l-8,16M930,556l-14,-12M990,505l12,-18"/>
</g>
<rect x="799" y="475" width="210" height="98" filter="url(#tx)"/>
<rect x="799" y="475" width="210" height="98" filter="url(#tx2)"/>
<g filter="url(#bl)" opacity=".62"><path d="M856,478L882,478L887,515L898,542L900,570L842,570L842,508Z" fill="#9d7761"/><path d="M905,524L930,518L965,523L1005,531L1005,538L965,534L930,531L908,538Z" fill="#a5846d"/></g>
<path d="M823.2,552L860,552L859.5,557L828,556.6L827.5,572L822.5,572Z" fill="#2b2123"/>
<path d="M828,556.6L864,557L867,572L827.5,572Z" fill="#c6b9ab"/>
<path d="M834,557v15M846,557v15M857,557v15M828,563h39" stroke="#ab9d8e" stroke-width=".7" fill="none"/>
<g fill="none" stroke="#f5a30a" stroke-width="1.05" stroke-linejoin="round">
<path d="M835.6,572 L834.2,500 Q834.2,489 845,488.7 L868,488.7 Q878.8,489 879,501 L879.4,560 L880.3,572"/>
<path d="M925,572 L923.7,500 Q923.7,489.3 934,488.8 L957,488.7 Q969,489.5 969.2,501 L969.2,572"/>
<path d="M846.5,571.6 L871.9,559.7 L934,571.8"/>
</g>
<path d="M994.1,484.7L998.3,488.9M998.3,484.7L994.1,488.9" stroke="#fff" stroke-width=".75" fill="none" opacity=".95"/>
</svg>
<div class="abs" style="left:0;top:96px;width:96.4px;height:1.1px;background:#f47b20"></div>
<div class="abs" style="left:94.3px;top:94.6px;width:4.2px;height:4.2px;border-radius:50%;background:#f47b20"></div>
</div>

<div class="lay">
<div class="t" style="left:803.90px;top:482.00px;font-size:6.6px;color:#ffffff;letter-spacing:-0.258px;">Flight Replay</div>
<div class="t" style="left:804.04px;top:578.00px;font-size:8px;color:#ffffff;letter-spacing:-0.190px;-webkit-text-stroke:0.12px currentColor;">Manual Project / Spraying Plan</div>
<div class="t" style="left:804.21px;top:590.00px;font-size:4.2px;color:#d0d0d0;letter-spacing:0.295px;">65430be6-ed2b-4eed-a0cf-85bb375cd0ba</div>

</div>
</body>
</html>
